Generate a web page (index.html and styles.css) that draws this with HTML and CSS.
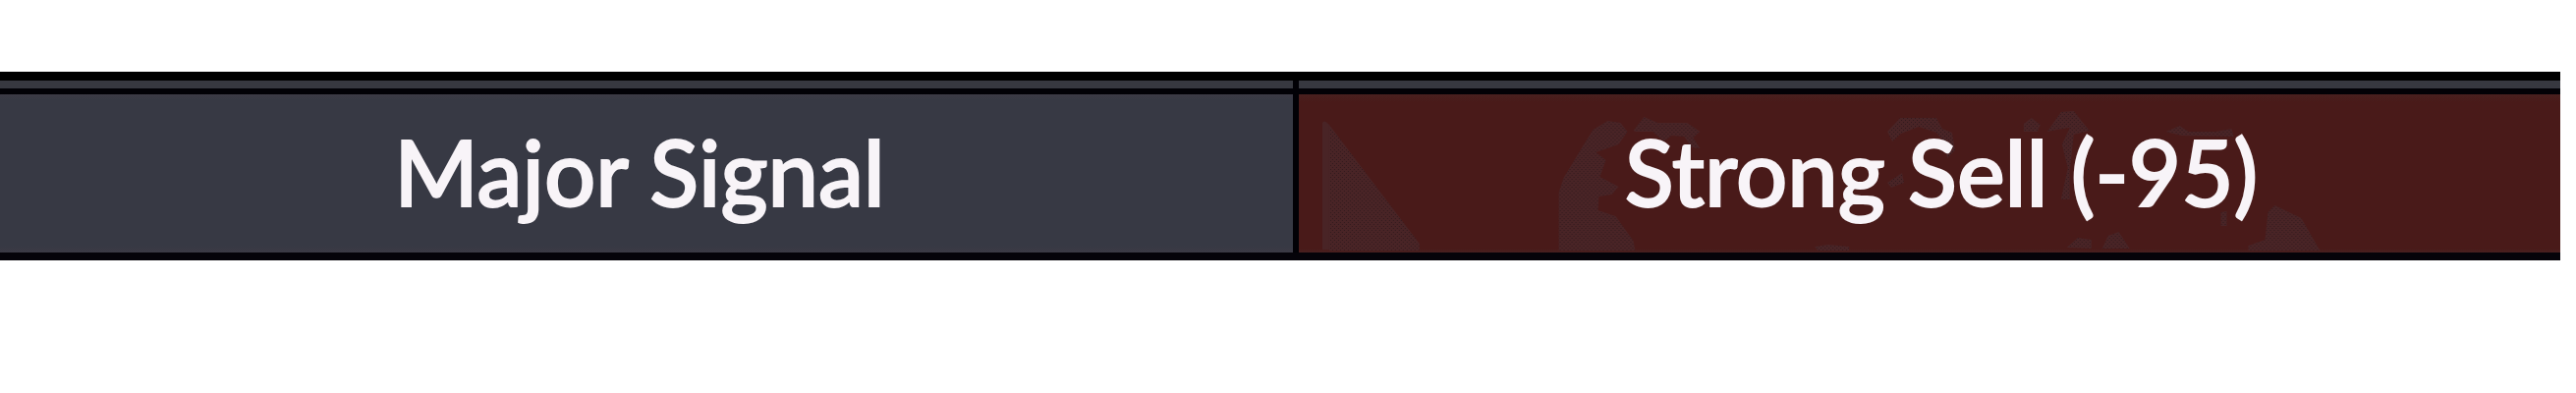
FILE: index.html
```html
<!DOCTYPE html>
<html lang="en">
<head>
<meta charset="utf-8">
<title>Major Signal</title>
<link rel="stylesheet" href="styles.css">
</head>
<body>
<table class="signals">
  <tbody>
    <tr class="strip"><td></td><td></td></tr>
    <tr class="signal">
      <th class="name" scope="row">Major Signal</th>
      <td class="value">
        <svg class="texture" viewBox="0 0 1286 161" preserveAspectRatio="none" aria-hidden="true">
          <defs>
            <pattern id="grain" width="4" height="4" patternUnits="userSpaceOnUse">
              <rect width="4" height="4" fill="#492426"/>
              <rect width="1" height="1" fill="#321a1d"/>
              <rect x="2" y="2" width="1" height="1" fill="#321a1d"/>
            </pattern>
          </defs>
          <path fill="#492426" d="M24 29Q26 25 31 31V158H24Z"/>
          <g fill="url(#grain)">
            <path d="M31 31L123 152V159H31Z"/>
            <path d="M265 159V100L270 85L290 52L300 36L315 27L328 29L335 38L326 51L303 59L313 67L307 84L326 94L319 102L306 104L305 118L323 124L341 149L343 159Z"/>
            <path d="M341 37L352 23L366 29L396 29L409 38L402 44L409 55L400 54L393 43L380 42L372 48L361 38L344 38Z"/>
            <path d="M600 38L613 24L650 24L656 35L666 39L669 57L661 65L659 50L650 39L632 33L614 40L605 48Z"/>
            <path d="M600 90L615 80L617 90L604 95Z"/>
            <path d="M739 38V30L747 24L756 31L753 38Z"/>
            <path d="M763 38L777 18L790 17L806 37L790 41L786 77V107H777L784 75L778 51L786 34L773 36Z"/>
            <path d="M884 38L898 32L907 38L935 38L951 35L953 43L900 42Z"/>
            <path d="M783 156L794 146L808 148L808 157Z"/>
            <path d="M819 157L825 144L836 140L847 157Z"/>
            <path d="M968 159V154L985 148L988 120L995 113L1022 126L1041 159Z"/>
            <path d="M526 155L540 153L561 155V159H529Z"/>
            <path d="M940 120L946 119V134H940Z"/>
          </g>
        </svg>
        <span class="label">Strong Sell (-95)</span>
      </td>
    </tr>
  </tbody>
</table>
</body>
</html>
```
FILE: styles.css
```css
body {
  margin: 73px 16px 0 0;
  background: #fff;
  font-family: "Trebuchet MS", Lato, sans-serif;
}

.signals {
  width: 100%;
  table-layout: fixed;
  border-collapse: separate;
  border-spacing: 0;
  background: #000;
  border-top: 9px solid #000;
  border-bottom: 8px solid #050309;
}

.signals th,
.signals td {
  padding: 0;
}

.strip td {
  height: 8px;
  background: #373840;
  border-bottom: 6px solid #020106;
}

.signals tr > :first-child {
  width: 50.5%;
  border-right: 6px solid #020106;
}

.signal {
  font-size: 92px;
  line-height: 157px;
  color: #f8f4f8;
  -webkit-text-stroke: 2px #f8f4f8;
}

.name,
.value {
  font-weight: 500;
  text-align: center;
  white-space: nowrap;
}

.signal .name {
  padding: 0 14px 4px 0;
  background: linear-gradient(#3c3a45, #373944 6px, #373944 154px, #3c3a45);
}

.signal .value {
  position: relative;
  padding: 0 0 4px 24px;
  background: linear-gradient(#48201f, #491a19 8px, #491a19 157px, #482020);
}

.texture {
  position: absolute;
  inset: 0;
  width: 100%;
  height: 100%;
  -webkit-text-stroke: 0;
}

.label {
  position: relative;
}
```
